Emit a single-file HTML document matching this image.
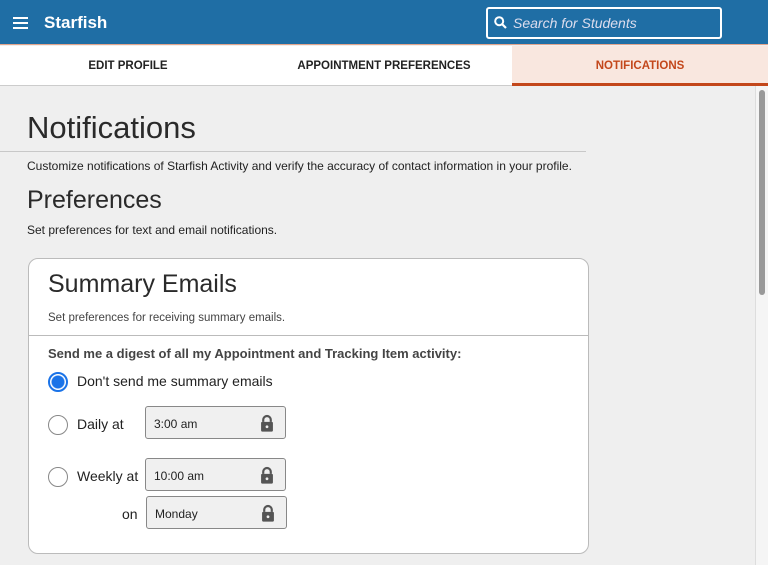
<!DOCTYPE html>
<html><head><style>
*{margin:0;padding:0;box-sizing:border-box}
body{width:768px;height:565px;overflow:hidden;background:#efefef;font-family:"Liberation Sans",Arial,sans-serif;color:#222;position:relative}
.hdr{position:absolute;left:0;top:0;width:768px;height:45px;background:#1f6ea5;border-bottom:1px solid #e3a58c}
.ham{position:absolute;left:13px;top:17px;width:15px}
.ham i{display:block;height:2px;background:#fff;margin-bottom:3px}
.logo{position:absolute;left:44px;top:13px;color:#fff;font-weight:bold;font-size:17px}
.search{position:absolute;left:486px;top:7px;width:236px;height:32px;border:2px solid #fff;border-radius:3px;color:#dde;font-style:italic;font-size:14px;padding:6px 0 0 25px}
.tabs{position:absolute;left:0;top:46px;width:755px;height:40px;background:#fff;border-bottom:1px solid #ccc}
.tab{position:absolute;top:0;height:40px;line-height:41px;font-size:11.5px;font-weight:bold;text-align:center}
.sb{position:absolute;left:755px;top:86px;width:13px;height:479px;background:#f5f5f5;border-left:1px solid #ddd}
.sb i{position:absolute;left:3px;top:4px;width:6px;height:205px;background:#999;border-radius:3px}
.a{position:absolute}
.card{position:absolute;left:28px;top:258px;width:561px;height:296px;background:#fff;border:1px solid #bbb;border-radius:10px}
.rad{position:absolute;width:20px;height:20px;border-radius:50%;border:1.5px solid #888;background:#fff}
.fld{position:absolute;width:141px;height:33px;border:1.5px solid #888;border-radius:3px;background:#f0f0f0;font-size:12px;padding:10px 0 0 8px}
.lk{position:absolute;right:11px;top:7px;width:14px;height:18px}
</style></head><body>
<div class="hdr"><div class="ham"><i></i><i></i><i></i></div><div class="logo">Starfish</div>
<div class="search"><svg style="position:absolute;left:6px;top:7px" width="13" height="13" viewBox="0 0 13 13"><circle cx="5.2" cy="5.2" r="4" fill="none" stroke="#fff" stroke-width="2"/><path d="M8 8l4 4" stroke="#fff" stroke-width="2.2"/></svg>Search for Students</div></div>
<div class="tabs">
<div class="tab" style="left:0;width:256px;color:#222">EDIT PROFILE</div>
<div class="tab" style="left:256px;width:256px;color:#222">APPOINTMENT PREFERENCES</div>
<div class="tab" style="left:512px;width:256px;background:#f9e7df;color:#c3471b;border-bottom:3px solid #c3471b">NOTIFICATIONS</div>
</div>
<div class="sb"><i></i></div>
<div class="a" style="left:27px;top:110px;font-size:31px;color:#2a2a2a">Notifications</div>
<div class="a" style="left:0;top:151px;width:586px;height:1px;background:#c8c8c8"></div>
<div class="a" style="left:27px;top:159px;font-size:12px">Customize notifications of Starfish Activity and verify the accuracy of contact information in your profile.</div>
<div class="a" style="left:27px;top:186px;font-size:25px;color:#2a2a2a">Preferences</div>
<div class="a" style="left:27px;top:223px;font-size:12px">Set preferences for text and email notifications.</div>
<div class="card">
<div class="a" style="left:19px;top:11px;font-size:25px;color:#2a2a2a">Summary Emails</div>
<div class="a" style="left:19px;top:53px;font-size:11.5px;color:#444">Set preferences for receiving summary emails.</div>
<div class="a" style="left:0;top:76px;width:559px;height:1px;background:#bbb"></div>
<div class="a" style="left:19px;top:87px;font-size:13px;font-weight:bold;color:#444">Send me a digest of all my Appointment and Tracking Item activity:</div>
<div class="rad" style="left:19px;top:113px;border:2px solid #1a73e8;background:radial-gradient(circle,#1a73e8 6px,#fff 7px)"></div>
<div class="a" style="left:48px;top:114px;font-size:14px">Don't send me summary emails</div>
<div class="rad" style="left:19px;top:156px"></div>
<div class="a" style="left:48px;top:157px;font-size:14px">Daily at</div>
<div class="fld" style="left:116px;top:147px">3:00 am<svg class="lk" viewBox="0 0 13 16"><path d="M3 7V5a3.5 3.5 0 017 0v2" fill="none" stroke="#555" stroke-width="2"/><rect x="1" y="7" width="11" height="9" rx="1" fill="#555"/><circle cx="6.5" cy="11.5" r="1.3" fill="#f0f0f0"/></svg></div>
<div class="rad" style="left:19px;top:208px"></div>
<div class="a" style="left:48px;top:209px;font-size:14px">Weekly at</div>
<div class="fld" style="left:116px;top:199px">10:00 am<svg class="lk" viewBox="0 0 13 16"><path d="M3 7V5a3.5 3.5 0 017 0v2" fill="none" stroke="#555" stroke-width="2"/><rect x="1" y="7" width="11" height="9" rx="1" fill="#555"/><circle cx="6.5" cy="11.5" r="1.3" fill="#f0f0f0"/></svg></div>
<div class="a" style="left:93px;top:247px;font-size:14px">on</div>
<div class="fld" style="left:117px;top:237px">Monday<svg class="lk" viewBox="0 0 13 16"><path d="M3 7V5a3.5 3.5 0 017 0v2" fill="none" stroke="#555" stroke-width="2"/><rect x="1" y="7" width="11" height="9" rx="1" fill="#555"/><circle cx="6.5" cy="11.5" r="1.3" fill="#f0f0f0"/></svg></div>
</div>
</body></html>
